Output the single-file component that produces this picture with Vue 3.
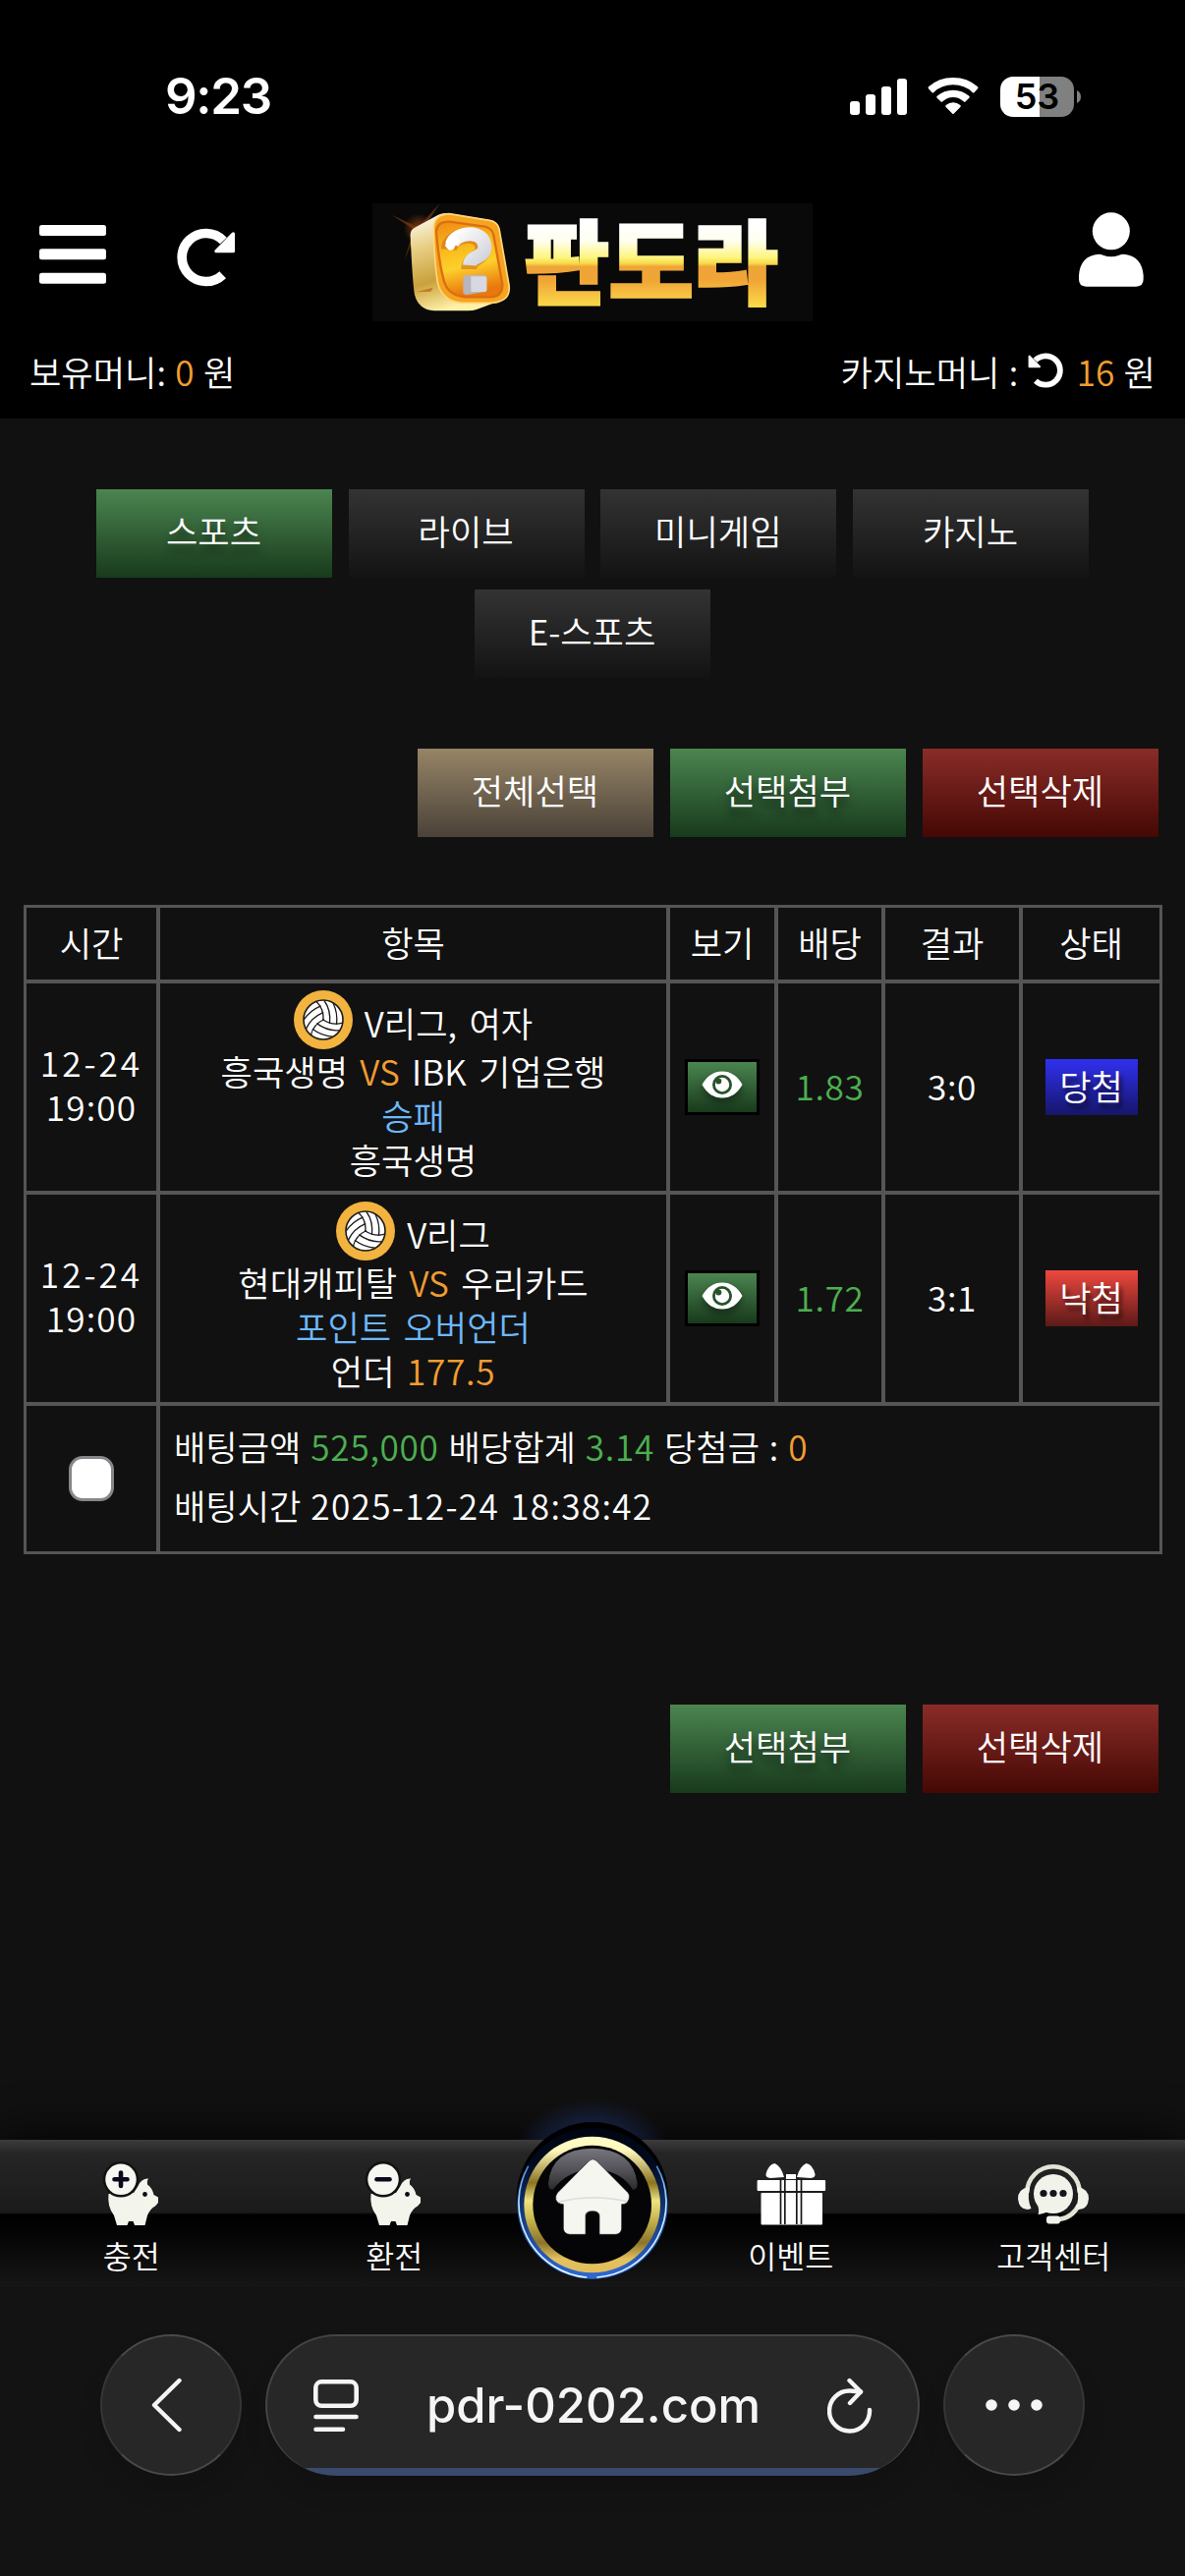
<template>
  <div class="page">
    <header class="header">
      <div class="status">
        <span class="clock">9:23</span>
        <div class="status-icons">
          <svg width="58" height="37" viewBox="0 0 58 37" fill="#fff">
            <rect x="0" y="23" width="10" height="14" rx="3" />
            <rect x="16" y="16" width="10" height="21" rx="3" />
            <rect x="32" y="8" width="10" height="29" rx="3" />
            <rect x="48" y="0" width="10" height="37" rx="3" />
          </svg>
          <svg class="wifi" width="52" height="38" viewBox="0 0 156 114" fill="#fff">
            <path d="M3 34 Q0 31 3 28 Q34 0 78 0 T153 28 Q156 31 153 34 L143 45 Q140 48 137 45 Q113 22 78 22 T19 45 Q16 48 13 45Z" />
            <path d="M29 62 Q26 59 29 56 Q50 38 78 38 T127 56 Q130 59 127 62 L116 73 Q113 76 110 73 Q96 60 78 60 T46 73 Q43 76 40 73Z" />
            <path d="M56 90 Q53 87 56 84 Q66 76 78 76 T100 84 Q103 87 100 90 L80 110 Q78 112 76 110Z" />
          </svg>
          <div class="battery"><span>53</span></div>
          <svg class="nub" width="4" height="13" viewBox="0 0 4 13" fill="#808080"><path d="M0 0 Q4 2 4 6.500 T0 13Z" /></svg>
        </div>
      </div>

      <div class="topbar">
        <div class="left-icons">
          <svg width="68" height="60" viewBox="0 0 68 60" fill="#fff">
            <rect y="0" width="68" height="11" rx="2.500" />
            <rect y="24.300" width="68" height="11" rx="2.500" />
            <rect y="48.700" width="68" height="11" rx="2.500" />
          </svg>
          <svg class="reload" width="60" height="60" viewBox="480 97 180 180" fill="none" stroke="#fff">
            <path d="M620 240 A73.500 73.500 0 1 1 622 136" stroke-width="29" />
            <path d="M652 115V168H600Z" fill="#fff" stroke-width="10" stroke-linejoin="round" />
          </svg>
        </div>
        <svg class="logo" width="448" height="120" viewBox="27 21 1344 360">
          <defs>
            <linearGradient id="gold" x1="0" y1="80" x2="0" y2="334" gradientUnits="userSpaceOnUse">
              <stop offset="0" stop-color="#fff" />
              <stop offset=".22" stop-color="#fffef0" />
              <stop offset=".42" stop-color="#fdf57c" />
              <stop offset=".49" stop-color="#f8d84a" />
              <stop offset=".53" stop-color="#eea436" />
              <stop offset=".7" stop-color="#f0a637" />
              <stop offset="1" stop-color="#fbd94a" />
            </linearGradient>
            <linearGradient id="side" x1="0" y1="0" x2=".3" y2="1">
              <stop offset="0" stop-color="#fff" />
              <stop offset=".35" stop-color="#e9cf85" />
              <stop offset=".7" stop-color="#c9a13c" />
              <stop offset="1" stop-color="#fff0a8" />
            </linearGradient>
            <linearGradient id="face" x1="0" y1="0" x2=".2" y2="1">
              <stop offset="0" stop-color="#f08a14" />
              <stop offset=".45" stop-color="#fbbf1e" />
              <stop offset=".65" stop-color="#fdd02c" />
              <stop offset="1" stop-color="#e9780e" />
            </linearGradient>
            <linearGradient id="mark" x1="0" y1="0" x2="1" y2="1">
              <stop offset="0" stop-color="#fff" />
              <stop offset="1" stop-color="#cfcfda" />
            </linearGradient>
            <radialGradient id="flare">
              <stop offset="0" stop-color="#a44a10" stop-opacity=".8" />
              <stop offset="1" stop-color="#a44a10" stop-opacity="0" />
            </radialGradient>
          </defs>
          <rect x="27" y="21" width="1344" height="360" fill="#090909" />
          <circle cx="168" cy="98" r="46" fill="url(#flare)" />
          <path d="M86 56 L170 95 L160 105Z M233 21 L185 95 L170 90Z M125 195 L150 110 L158 114Z" fill="#7a3c12" opacity=".7" />
          <path d="M143 122 Q140 102 160 93 L228 56 Q242 49 262 52 L385 72 Q408 76 414 98 L444 270 Q448 300 428 314 L345 345 Q335 349 320 349 H215 Q168 346 156 300 Q150 270 143 122Z" fill="url(#side)" />
          <path d="M214 92 Q218 54 262 53 L385 73 Q408 77 414 98 L444 270 Q448 300 430 313 Q415 324 388 325 H300 Q238 318 226 262 Q216 200 214 92Z" fill="#f6a321" stroke="#ffd877" stroke-width="5" />
          <path d="M222 108 Q224 76 262 77 L370 92 Q392 96 397 118 L424 268 Q426 302 392 307 H310 Q256 302 245 256 Q230 200 222 108Z" fill="url(#face)" stroke="#d96f10" stroke-width="7" />
          <path d="M160 292 L212 278 L205 290Z" fill="#c07a20" />
          <g fill="none" stroke-linejoin="round">
            <path d="M268 154 C272 104 372 92 372 150 C372 184 330 176 330 214" stroke="#c2621c" stroke-width="48" transform="translate(-8 8)" opacity=".5" />
            <path d="M270 146 C282 106 370 100 370 154 C370 190 326 178 324 210" stroke="url(#mark)" stroke-width="42" />
          </g>
          <path d="M249 150 Q252 126 276 120 L296 138 Q280 144 276 160 Q262 172 249 150Z" fill="#fff" />
          <path d="M304 248 Q306 242 314 240 H368 Q376 240 376 248 V284 Q376 292 368 292 L316 300 Q304 300 304 292Z" fill="#b9b4bd" />
          <path d="M328 244 H370 Q376 244 376 250 V284 Q376 291 368 291 H328Z" fill="#d7d8e0" />
          <text class="brand" x="492" y="306" textLength="772" lengthAdjust="spacingAndGlyphs" fill="url(#gold)" stroke="url(#gold)" stroke-width="10">판도라</text>
        </svg>
        <svg class="user" width="66" height="76" viewBox="774 47 198 228" fill="#fff">
          <circle cx="872.500" cy="105" r="57" />
          <path d="M774 240 Q778 180 834 175 Q842 175 848 178 Q872 187 897 178 Q903 175 911 175 Q966 180 971 240 V252 Q971 274 949 274 H796 Q774 274 774 252Z" />
        </svg>
      </div>

      <div class="money">
        <span>보유머니: <b>0</b> 원</span>
        <span>
          카지노머니 :
          <svg class="undo" width="36" height="36" viewBox="480 97 180 180" fill="none" stroke="#fff">
            <path d="M620 240 A73.500 73.500 0 1 1 622 136" stroke-width="29" />
            <path d="M652 115V168H600Z" fill="#fff" stroke-width="10" stroke-linejoin="round" />
          </svg>
          <b>16</b> 원
        </span>
      </div>
    </header>

    <main class="main">
      <nav class="tabs">
        <button v-for="(tab, i) in tabs" :key="tab" class="btn" :class="i === active ? 'green' : 'dark'" @click="active = i">{{ tab }}</button>
      </nav>

      <div class="actions">
        <button class="btn tan" @click="checked = true">전체선택</button>
        <button class="btn green">선택첨부</button>
        <button class="btn red">선택삭제</button>
      </div>

      <div class="bets">
        <div v-for="h in heads" :key="h" class="cell">{{ h }}</div>
        <template v-for="bet in bets" :key="bet.home">
          <div class="cell date"><span class="day">12-24</span><span>19:00</span></div>
          <div class="cell match">
            <div class="league">
              <svg width="60" height="60" viewBox="-30 -30 60 60">
                <circle r="30" fill="#f2b33f" />
                <circle r="20" fill="#fff" stroke="#1b1b1b" stroke-width="1.600" />
                <g fill="none" stroke="#1b1b1b" stroke-width="1.300">
                  <path v-for="a in [0, 120, 240]" :key="a" :transform="`rotate(${a})`" d="M0 1 Q1 -11 -7 -18.500 M6.500 4 Q8 -10 1 -19.500 M13.500 5 Q15 -7 10 -17" />
                </g>
              </svg>
              <span>{{ bet.league }}</span>
            </div>
            <div>{{ bet.home }} <span class="orange">VS</span> {{ bet.away }}</div>
            <div class="blue">{{ bet.market }}</div>
            <div>{{ bet.pick }} <span v-if="bet.line" class="orange num">{{ bet.line }}</span></div>
          </div>
          <div class="cell flush">
            <button class="view">
              <svg width="42" height="28" viewBox="0 0 42 28">
                <path d="M0.500 14 Q8 0.500 21 0.500 T41.500 14 Q34 27.500 21 27.500 T0.500 14Z" fill="#fff" />
                <circle cx="21" cy="14" r="8.600" fill="none" stroke="#28522c" stroke-width="2.800" />
                <circle cx="17.300" cy="10.500" r="3" fill="#28522c" />
              </svg>
            </button>
          </div>
          <div class="cell odds num">{{ bet.odds }}</div>
          <div class="cell num">{{ bet.score }}</div>
          <div class="cell flush"><span class="badge" :class="bet.won ? 'win' : 'lose'">{{ bet.won ? '당첨' : '낙첨' }}</span></div>
        </template>
        <div class="cell flush"><span class="box" :class="{ on: checked }" @click="checked = !checked"></span></div>
        <div class="cell summary">
          <div>배팅금액 <span class="lime num">525,000</span> 배당합계 <span class="lime num">3.14</span> 당첨금 : <span class="orange">0</span></div>
          <div>배팅시간 <span class="stamp">2025-12-24 18:38:42</span></div>
        </div>
      </div>

      <div class="actions bottom">
        <button class="btn green">선택첨부</button>
        <button class="btn red">선택삭제</button>
      </div>
    </main>

    <nav class="dock">
      <a v-for="sign in ['plus', 'minus']" :key="sign" class="item">
        <svg width="60" height="70" viewBox="0 0 60 70">
          <path d="M6.500 35 Q5 48 12 57 L15 67H25.500L27 63H31.500L33 67H43.500L46 57 Q49 50 54 47.500 L57 44V38.500L52.500 36 Q51 29 46 25.500 Q45 22 47 19.500 Q40 19 36.500 27 L32 34Z" fill="#f3f4ec" />
          <circle cx="43.500" cy="35.500" r="2.400" fill="#0b0b14" />
          <circle cx="19" cy="20.300" r="17" fill="#f6f7f0" stroke="#121212" stroke-width="2.500" />
          <path :d="sign === 'plus' ? 'M12.500 20.300H25.500M19 13.500V27' : 'M12.500 20.300H25.500'" stroke="#0a0a1c" stroke-width="4.600" stroke-linecap="round" />
        </svg>
        <span>{{ sign === 'plus' ? '충전' : '환전' }}</span>
      </a>
      <a class="home">
        <svg width="210" height="210" viewBox="0 0 630 630">
          <defs>
            <radialGradient id="glow">
              <stop offset=".5" stop-color="#1c2f66" stop-opacity=".75" />
              <stop offset="1" stop-color="#1c2f66" stop-opacity="0" />
            </radialGradient>
            <linearGradient id="ring" x1="0" y1="0" x2="0" y2="1">
              <stop offset="0" stop-color="#000510" />
              <stop offset=".25" stop-color="#020b20" />
              <stop offset=".5" stop-color="#12306e" />
              <stop offset="1" stop-color="#2e6ad8" />
            </linearGradient>
            <linearGradient id="rim" x1="0" y1="0" x2="0" y2="1">
              <stop offset="0" stop-color="#fffcc4" />
              <stop offset=".1" stop-color="#fff9bd" />
              <stop offset=".34" stop-color="#8a7320" />
              <stop offset=".47" stop-color="#efe481" />
              <stop offset=".6" stop-color="#c9b94f" />
              <stop offset=".78" stop-color="#8b742a" />
              <stop offset=".9" stop-color="#e3c15f" />
              <stop offset="1" stop-color="#e2bd5a" />
            </linearGradient>
            <linearGradient id="gloss" x1="0" y1="0" x2="0" y2="1">
              <stop offset="0" stop-color="#77757d" />
              <stop offset=".5" stop-color="#55545a" />
              <stop offset="1" stop-color="#2a2a2e" />
            </linearGradient>
            <linearGradient id="edge" x1="0" y1="0" x2="0" y2="1">
              <stop offset="0" stop-color="#4c86d8" />
              <stop offset=".35" stop-color="#b9e8ff" />
              <stop offset="1" stop-color="#eafcff" />
            </linearGradient>
          </defs>
          <clipPath id="above"><rect width="630" height="144" /></clipPath>
          <ellipse cx="309" cy="190" rx="240" ry="170" fill="url(#glow)" opacity=".8" clip-path="url(#above)" />
          <circle cx="309" cy="322" r="232" fill="#000" />
          <circle cx="309" cy="338" r="231" fill="url(#ring)" />
          <path d="M112 226 A229 229 0 0 0 290 564 M506 226 A229 229 0 0 1 324 564" fill="none" stroke="url(#edge)" stroke-width="5" stroke-linecap="round" />
          <circle cx="308" cy="342" r="208" fill="url(#rim)" />
          <circle cx="308" cy="342" r="181" fill="#050507" />
          <path d="M174 278 Q182 172 308 170 Q434 172 446 278 Q446 296 432 296 Q400 240 310 230 Q230 240 188 296 Q174 296 174 278Z" fill="url(#gloss)" />
          <path d="M300 207 Q309 199 320 207 L418 306 Q424 314 420 326 Q414 342 398 341 V415 Q396 432 380 433 H330 V376 Q330 362 309 362 Q288 362 288 376 V433 H240 Q222 432 220 415 V341 Q202 340 197 326 Q195 314 202 306Z" fill="#f6f6f1" stroke="#1c1c20" stroke-width="2" />
          <path d="M205 334 Q309 308 414 332" fill="none" stroke="#dedede" stroke-width="5" />
        </svg>
      </a>
      <a class="item">
        <svg width="76" height="70" viewBox="0 0 76 70" fill="#fff">
          <path d="M12.500 15 Q15 5 21.500 4 Q28 7 31 18 L17 19 Q12 18.500 12.500 15Z M62.500 15 Q60 5 53.500 4 Q47 7 44 18 L58 19 Q63 18.500 62.500 15Z" />
          <rect x="33" y="15" width="10" height="5" />
          <rect x="3.600" y="21" width="69.500" height="11" rx="1" />
          <rect x="7.500" y="34" width="62.500" height="32.500" rx="1" />
          <path d="M27.500 20V66M31.800 20V66M43.800 20V66M48.500 20V66" stroke="#171717" stroke-width="1.700" />
        </svg>
        <span>이벤트</span>
      </a>
      <a class="item">
        <svg width="80" height="70" viewBox="0 0 80 70" fill="#f1f2e9">
          <path d="M13.200 34 A26.800 26.800 0 0 1 66.800 34 M66 46 Q60 59 46 61" fill="none" stroke="#e3e4d6" stroke-width="4.500" />
          <path d="M15 28 Q4 30 4 40 Q5 51 14 51 L17.500 50 Q13 40 16 28Z M65 28 Q76 30 76 40 Q75 51 66 51 L62.500 50 Q67 40 64 28Z" />
          <path d="M24 47 Q26 51 24.500 56 Q31 55 34 53Z" />
          <circle cx="40" cy="35" r="20" />
          <rect x="33" y="57.500" width="14" height="8" rx="3" />
          <g fill="#15151a"><circle cx="30" cy="34.500" r="3.600" /><circle cx="40" cy="34.500" r="3.600" /><circle cx="50" cy="34.500" r="3.600" /></g>
        </svg>
        <span>고객센터</span>
      </a>
    </nav>

    <footer class="browser">
      <div class="round">
        <svg width="32" height="56" viewBox="0 0 32 56" fill="none" stroke="#f5f5f5" stroke-width="4.400" stroke-linecap="round" stroke-linejoin="round"><path d="M28.500 3 L3 28 L28.500 53" /></svg>
      </div>
      <div class="address">
        <svg width="48" height="56" viewBox="0 0 48 56" fill="none" stroke="#f5f5f5" stroke-width="4.600" stroke-linecap="round">
          <rect x="3.300" y="3.300" width="41.400" height="24.500" rx="6" />
          <path d="M3.500 39H44.500M3.500 51.700H31" />
        </svg>
        <span class="url">pdr-0202.com</span>
        <svg width="46" height="58" viewBox="0 0 46 58" fill="none" stroke="#f5f5f5" stroke-width="4.400" stroke-linecap="round" stroke-linejoin="round">
          <path d="M43 33 A20.500 20.500 0 1 1 23 13.500 L34 14.500" />
          <path d="M22.500 3 L34 14.500 L23 26" />
        </svg>
      </div>
      <div class="round">
        <svg width="60" height="14" viewBox="0 0 60 14" fill="#f5f5f5"><circle cx="7" cy="7" r="5.800" /><circle cx="30" cy="7" r="5.800" /><circle cx="53" cy="7" r="5.800" /></svg>
      </div>
    </footer>
  </div>
</template>

<script setup>
import { ref } from 'vue'

const tabs = ['스포츠', '라이브', '미니게임', '카지노', 'E-스포츠']
const heads = ['시간', '항목', '보기', '배당', '결과', '상태']
const active = ref(0)
const checked = ref(false)

const bets = [
  { league: 'V리그, 여자', home: '흥국생명', away: 'IBK 기업은행', market: '승패', pick: '흥국생명', odds: '1.83', score: '3:0', won: true },
  { league: 'V리그', home: '현대캐피탈', away: '우리카드', market: '포인트 오버언더', pick: '언더', line: '177.5', odds: '1.72', score: '3:1', won: false }
]
</script>

<style>
body { margin: 0; background: #111; }
</style>

<style scoped>
.page { width: 1206px; height: 2622px; display: flex; flex-direction: column; overflow: hidden; background: #111; color: #fff; font-family: "Noto Sans CJK KR", sans-serif; font-size: 35.2px; font-weight: 350; line-height: 45px; word-spacing: 4.5px; }
.page * { box-sizing: border-box; }
svg { display: block; flex-shrink: 0; }
b { font-weight: inherit; color: #f19d32; }

.header { height: 426px; background: #000; flex-shrink: 0; }
.status { height: 207px; padding: 0 106px 11px 168px; display: flex; align-items: center; justify-content: space-between; }
.clock { font: 600 51px/60px Inter, sans-serif; letter-spacing: -1.3px; }
.status-icons { display: flex; align-items: center; }
.wifi { margin: 0 22px 0 21px; }
.battery { width: 75px; height: 41px; border-radius: 13px; background: linear-gradient(90deg, #fff 40px, #808080 40px); color: #000; text-align: center; font: 600 36px/41px Inter, sans-serif; }
.nub { margin-left: 3px; }

.topbar { height: 120px; padding: 0 42px 0 40px; display: grid; grid-template-columns: 339px 448px 1fr; }
.left-icons { display: flex; padding-top: 22px; }
.reload { margin: 3px 0 0 72px; }
.logo { overflow: visible; }
.user { justify-self: end; margin-top: 9px; }
.brand { font-family: "Noto Sans CJK KR", sans-serif; font-size: 276px; font-weight: 900; word-spacing: 0; }
.money { height: 99px; padding: 1px 30px 0; display: flex; justify-content: space-between; align-items: center; word-spacing: 1.5px; }
.undo { display: inline-block; vertical-align: -2px; margin-right: 14px; transform: scaleX(-1); }

.main { flex: 1; padding: 72px 24px 0; }
.tabs { display: flex; flex-wrap: wrap; justify-content: center; gap: 12px 16.7px; padding: 0 60px; }
.btn { width: 240px; height: 90px; padding: 0 1px 7px 0; border: 0; color: #fff; font: inherit; }
.green { background: linear-gradient(#4b8550, #183a1c); text-shadow: 0 8px 8px rgba(0, 0, 0, .5); }
.dark { background: linear-gradient(#333, #131313); }
.tan { background: linear-gradient(#968466, #4a4238); }
.red { background: linear-gradient(#8a2c28, #450804); }
.actions { display: flex; justify-content: flex-end; gap: 17px; padding-right: 3px; margin-top: 72px; }
.actions.bottom { margin-top: 153px; }

.bets { margin-top: 69px; width: 1159px; padding: 3px; background: #555; display: grid; gap: 4px; grid-template-columns: 132px 515px 106px 105px 136px 139px; grid-template-rows: 73px 211px 211px 148px; }
.cell { padding-bottom: 4px; background: #111; display: flex; align-items: center; justify-content: center; text-align: center; }
.flush { padding-bottom: 0; }
.num { letter-spacing: .7px; }
.date { flex-direction: column; padding-bottom: 7px; letter-spacing: 1.2px; }
.day { letter-spacing: 3px; }
.match { flex-direction: column; }
.league { display: flex; height: 60px; gap: 12px; margin-bottom: -1px; }
.league span { padding-top: 10px; }
.orange { color: #f19d32; }
.blue { color: #6cb8fb; }
.lime, .odds { color: #4caf50; }
.view { width: 76px; height: 57px; padding: 0 0 5px; border: 3px solid #000; background: linear-gradient(#4b8550, #183a1c); display: flex; align-items: center; justify-content: center; }
.view svg { filter: drop-shadow(0 5px 4px rgba(0, 0, 0, .4)); }
.badge { width: 94px; height: 57px; line-height: 53px; text-shadow: 3px 5px 4px rgba(0, 0, 0, .6); }
.win { background: linear-gradient(#3030f0, #16166a); }
.lose { background: linear-gradient(#ee483e, #5c1a18); }
.box { width: 46px; height: 46px; border: 3px solid #86868b; border-radius: 14px; background: #fff; }
.box.on { background: #0a84ff; }
.summary { grid-column: 2 / -1; flex-direction: column; align-items: flex-start; padding: 0 0 7px 14px; line-height: 60px; word-spacing: 2px; }
.stamp { letter-spacing: 1.3px; }

.dock { height: 150px; flex-shrink: 0; position: relative; display: flex; background: linear-gradient(#3c3c3c 0, #252525 14px, #1b1b1b 74px, #000 76px, #030303 90px, #161616 150px); box-shadow: 0 0 50px #000; }
.item { flex: 1; display: flex; flex-direction: column; align-items: center; padding: 20px 0 0; font-size: 31.5px; line-height: 54px; }
.home { width: 136px; position: relative; }
.home svg { position: absolute; top: -48px; left: -35px; }

.browser { height: 294px; flex-shrink: 0; position: relative; background: #131313; display: flex; justify-content: center; gap: 24px; padding-top: 48px; }
.round, .address { height: 144px; border-radius: 72px; background: #272727; border: 2px solid #444; display: flex; align-items: center; box-shadow: 0 16px 24px rgba(0, 0, 0, .12); }
.round { width: 144px; justify-content: center; border-color: #4a4a4a #363636; }
.round:first-child svg { margin-right: 8px; }
.address { width: 666px; padding: 0 46px; justify-content: space-between; overflow: hidden; border-bottom: 0; background: linear-gradient(#272727 134px, #3a4a6c 134px); }
.url { font: 500 49px/60px Inter, sans-serif; color: #f5f5f5; }
</style>
